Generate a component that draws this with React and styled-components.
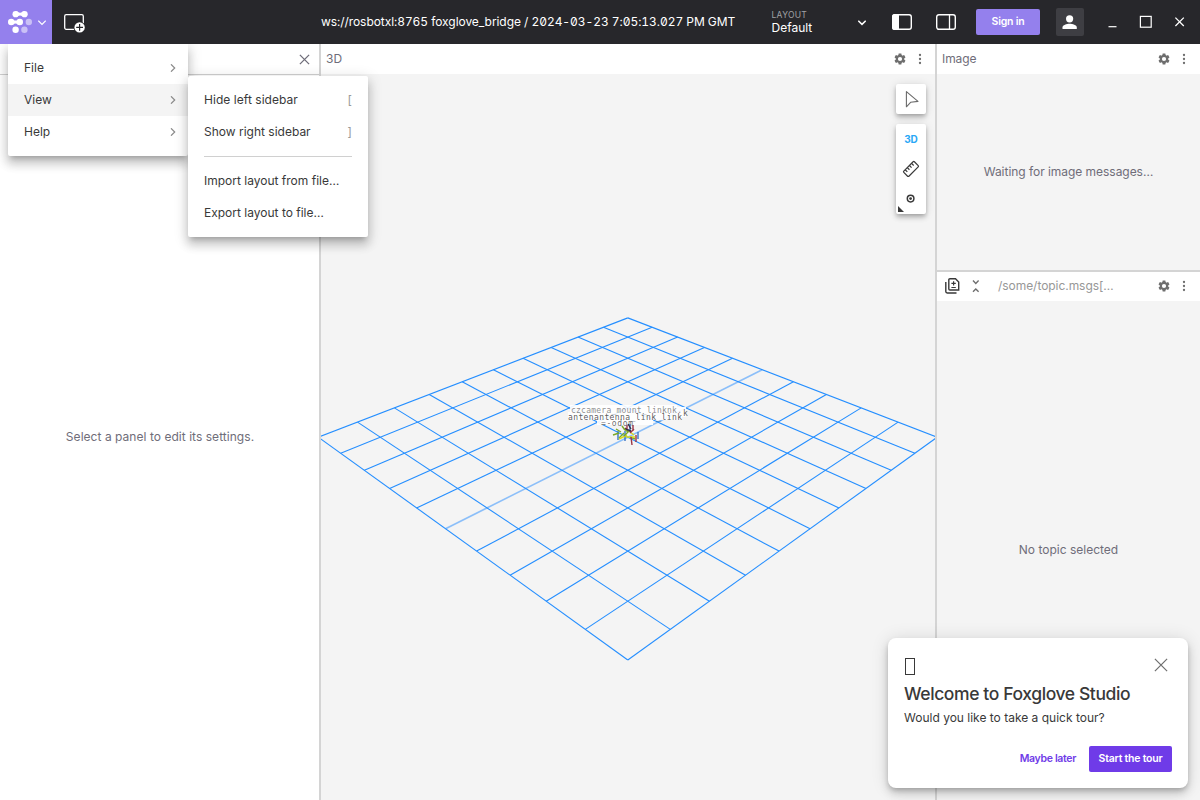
import React from "react";
import styled, { createGlobalStyle } from "styled-components";

const Global = createGlobalStyle`
  *{box-sizing:border-box}
  html,body,#root{margin:0;height:100%}
  body{overflow:hidden;font-family:Inter,"Liberation Sans",sans-serif;font-size:12px;color:#393939}
  svg{display:block;flex:none}
`;

const Page = styled.div`display:flex;flex-direction:column;width:1200px;height:800px;overflow:hidden;position:relative;background:#fff;`;
const AppBar = styled.header`display:flex;align-items:center;height:44px;flex:none;background:#27272b;color:#fff;`;
const LogoButton = styled.div`width:52px;height:44px;background:#9480ed;display:flex;align-items:center;padding-left:7px;gap:5px;`;
const AddPanel = styled.div`padding-left:11px;width:44px;`;
const Source = styled.div`flex:1;padding-left:225px;padding-bottom:2px;white-space:pre;font-feature-settings:"tnum","zero";letter-spacing:-.06px;`;
const LayoutPicker = styled.div`width:95px;display:flex;align-items:center;justify-content:space-between;margin-right:12px;`;
const LayoutLabel = styled.div`display:flex;flex-direction:column;padding:0 0 1px .5px;`;
const Overline = styled.span`font-size:8.5px;line-height:11px;letter-spacing:.3px;color:#a1a1a5;padding-top:1px;`;
const LayoutName = styled.span`font-size:12px;line-height:14px;`;
const BarIcons = styled.div`display:flex;gap:24px;padding-left:14px;padding-right:20px;`;
const SignIn = styled.div`width:64px;height:26px;border-radius:2px;background:#9480ed;font-size:10.5px;font-weight:600;letter-spacing:-.2px;display:flex;align-items:center;justify-content:center;padding-bottom:1px;`;
const Avatar = styled.div`margin-left:16px;width:28px;height:28px;border-radius:2px;background:#3e3e43;display:flex;align-items:center;justify-content:center;`;
const WindowControls = styled.div`display:flex;align-items:center;padding-left:20px;width:116px;gap:18px;`;

const Body = styled.main`display:flex;flex:1;min-height:0;`;
const Sidebar = styled.aside`width:319px;background:#fff;display:flex;flex-direction:column;`;
const SidebarHead = styled.div`height:31px;flex:none;border-bottom:1px solid #d0d0d0;display:flex;align-items:center;justify-content:flex-end;padding:0 9px 0 0;`;
const Empty = styled.div`flex:1;display:flex;align-items:center;justify-content:center;color:#6f6d79;padding:0 0 2px ${p => p.$nudge ?? 0}px;letter-spacing:${p => p.$track ?? 0}px;`;
const Mosaic = styled.section`flex:1;display:grid;grid-template-columns:614px 263px;gap:2px;background:#d4d4d4;padding-left:2px;min-height:0;`;
const RightColumn = styled.div`display:grid;grid-template-rows:226px 528px;gap:2px;`;
const Panel = styled.div`display:flex;flex-direction:column;background:#f4f4f4;position:relative;min-width:0;`;
const Toolbar = styled.div`height:${p => p.$h ?? 30}px;flex:none;background:#fff;display:flex;align-items:center;padding:0 ${p => p.$right ?? 10}px ${p => p.$bottom ?? 0}px ${p => p.$left ?? 5}px;`;
const ToolbarTitle = styled.span`flex:1;padding-bottom:1px;letter-spacing:${p => p.$track ?? 0}px;color:${p => p.$muted ? "#979797" : "#6f6d79"};`;
const ToolbarActions = styled.div`display:flex;align-items:center;gap:7px;`;
const PathIcons = styled.div`display:flex;align-items:center;gap:11px;margin-right:18px;`;
const Scene = styled.div`flex:1;min-height:0;`;
const Tools = styled.div`position:absolute;right:9px;top:40px;display:flex;flex-direction:column;gap:10px;`;
const ToolGroup = styled.div`width:30px;border-radius:2px;background:#fff;box-shadow:0 2px 4px -1px rgba(0,0,0,.2),0 4px 5px rgba(0,0,0,.14),0 1px 10px rgba(0,0,0,.12);`;
const Tool = styled.div`width:30px;height:30px;display:flex;align-items:center;justify-content:center;font-weight:700;font-size:10px;letter-spacing:-.2px;color:#29a8f6;`;

const menuShadow = "0 5px 5px -3px rgba(0,0,0,.2),0 8px 10px 1px rgba(0,0,0,.14),0 3px 14px 2px rgba(0,0,0,.12)";
const Menu = styled.div`position:absolute;left:${p => p.$x}px;top:${p => p.$y}px;width:180px;background:#fff;border-radius:${p => p.$flat ? "0 0 2px 2px" : "2px"};padding:8px 0;height:${p => p.$h}px;box-shadow:${menuShadow};clip-path:${p => p.$flat ? "inset(0 -30px -30px -30px)" : "none"};`;
const MenuItem = styled.div`height:32px;display:flex;align-items:center;justify-content:space-between;padding:0 ${p => p.$submenu ? 11.5 : 16}px 0 16px;background:${p => p.$active ? "#f4f4f4" : "transparent"};`;
const MenuText = styled.span`padding-bottom:2px;letter-spacing:${p => p.$track ?? 0}px;`;
const Shortcut = styled.span`color:#9a9a9a;padding-bottom:2px;`;
const MenuDivider = styled.div`height:1px;background:#d0d0d0;margin:8px 16px;`;

const Tour = styled.div`position:absolute;left:888px;top:638px;width:300px;height:150px;border-radius:8px;background:#fff;padding:16px;display:flex;flex-direction:column;box-shadow:0 3px 5px -1px rgba(0,0,0,.2),0 6px 10px rgba(0,0,0,.14),0 1px 18px rgba(0,0,0,.12);`;
const TourTop = styled.div`display:flex;justify-content:space-between;height:24px;padding:4px 4px 0 0;`;
const MissingGlyph = styled.span`width:10px;height:17px;border:1px solid #393939;margin-left:1px;`;
const TourTitle = styled.div`font-size:17.5px;font-weight:500;letter-spacing:-.4px;line-height:24px;margin-top:4px;`;
const TourText = styled.div`line-height:20px;margin-top:2px;`;
const TourActions = styled.div`display:flex;justify-content:flex-end;align-items:center;gap:13px;margin-top:18px;font-size:10.5px;font-weight:600;color:#6f3be8;letter-spacing:-.33px;`;
const LaterButton = styled.div`padding-bottom:1px;`;
const StartButton = styled.div`width:83px;height:26px;background:#6f3be8;color:#fff;border-radius:2px;display:flex;align-items:center;justify-content:center;letter-spacing:-.22px;padding-bottom:1px;`;

const Logo = () => (
  <svg width="26" height="24" viewBox="0 0 26 24" fill="#fff">
    <circle cx="8.6" cy="4.2" r="3.1" /><circle cx="17.6" cy="4.2" r="3.1" />
    <path d="M9 1.3 C11 1.5 11 2.8 13.1 2.8 C15.2 2.8 15.2 1.5 17.2 1.3 V7.1 C15.2 6.9 15.2 5.6 13.1 5.6 C11 5.6 11 6.9 9 7.1Z" />
    <circle cx="4.2" cy="12" r="3.2" /><circle cx="12.8" cy="12" r="3.2" />
    <path d="M4.4 8.9 C6.4 9.2 6.4 10.5 8.5 10.5 C10.6 10.5 10.6 9.2 12.6 8.9 V15.1 C10.6 14.8 10.6 13.5 8.5 13.5 C6.4 13.5 6.4 14.8 4.4 15.1Z" />
    <circle cx="21.8" cy="12" r="3.2" opacity=".5" />
    <circle cx="8.6" cy="19.8" r="3.2" /><circle cx="17.4" cy="19.8" r="3.2" opacity=".5" />
  </svg>
);
const Chevron = ({ dir = "down", color = "#fff", sw = 1.2 }) => (
  <svg width="8" height="8" viewBox="0 0 8 8" fill="none" stroke={color} strokeWidth={sw}>
    <path d={dir === "down" ? "M.3 2.7 4 6.4 7.7 2.7" : "M2 .3 5.7 4 2 7.7"} />
  </svg>
);
const Cross = ({ size, sw, color }) => (
  <svg width={size} height={size} viewBox={`0 0 ${size} ${size}`} stroke={color} strokeWidth={sw}>
    <path d={`M.9 .9 L${size - 0.9} ${size - 0.9} M${size - 0.9} .9 L.9 ${size - 0.9}`} />
  </svg>
);
const AddPanelIcon = () => (
  <svg width="23" height="22" viewBox="0 0 23 22">
    <rect x="1.7" y="3.7" width="18.6" height="14.6" rx="1.5" fill="none" stroke="#fff" strokeWidth="1.3" />
    <circle cx="16.6" cy="16.4" r="6" fill="#27272b" />
    <circle cx="16.6" cy="16.4" r="5.2" fill="#fff" />
    <path d="M16.6 13v6.8M13.2 16.4h6.8" stroke="#27272b" strokeWidth="1.2" />
  </svg>
);
const SidebarIcon = ({ right }) => (
  <svg width="20" height="16" viewBox="0 0 20 16">
    <rect x=".7" y=".7" width="18.6" height="14.6" rx="2.2" fill="none" stroke="#fff" strokeWidth="1.4" />
    {right ? <path d="M13.5 0v16" stroke="#fff" strokeWidth="1.3" /> : <path d="M2.5 0H7v16H2.5Q0 16 0 13.5v-11Q0 0 2.5 0" fill="#fff" />}
  </svg>
);
const Gear = () => (
  <svg width="14" height="14" viewBox="0 0 24 24" fill="#6e6e6e">
    <path d="M19.14 12.94c.04-.3.06-.61.06-.94 0-.32-.02-.64-.07-.94l2.03-1.58c.18-.14.23-.41.12-.61l-1.92-3.32c-.12-.22-.37-.29-.59-.22l-2.39.96c-.5-.38-1.03-.7-1.62-.94l-.36-2.54c-.04-.24-.24-.41-.48-.41h-3.84c-.24 0-.43.17-.47.41l-.36 2.54c-.59.24-1.13.57-1.62.94l-2.39-.96c-.22-.08-.47 0-.59.22L2.74 8.87c-.12.21-.08.47.12.61l2.03 1.58c-.05.3-.09.63-.09.94s.02.64.07.94l-2.03 1.58c-.18.14-.23.41-.12.61l1.92 3.32c.12.22.37.29.59.22l2.39-.96c.5.38 1.03.7 1.62.94l.36 2.54c.05.24.24.41.48.41h3.84c.24 0 .44-.17.47-.41l.36-2.54c.59-.24 1.13-.56 1.62-.94l2.39.96c.22.08.47 0 .59-.22l1.92-3.32c.12-.22.07-.47-.12-.61zM12 15.6A3.6 3.6 0 1 1 12 8.4a3.6 3.6 0 0 1 0 7.2" />
  </svg>
);
const Dots = () => (
  <svg width="12" height="14" viewBox="0 0 12 14" fill="#6e6e6e">
    <circle cx="6" cy="3" r="1.15" /><circle cx="6" cy="7" r="1.15" /><circle cx="6" cy="11" r="1.15" />
  </svg>
);
const Person = () => (
  <svg width="16" height="16" viewBox="0 0 16 16" fill="#fff">
    <circle cx="7.6" cy="4.8" r="3.6" /><path d="M.5 15v-1.6C.5 11.1 4.7 9.8 7.6 9.8s7.2 1.3 7.2 3.6V15z" />
  </svg>
);
const DiffIcon = () => (
  <svg width="16" height="18" viewBox="0 0 16 18" fill="none" stroke="#393939" strokeWidth="1.4">
    <path d="M4.9 1.7H10.5L13.7 5V13H4.9Q3.8 13 3.8 12V2.7Q3.8 1.7 4.9 1.7Z" />
    <path d="M.8 5V14.6Q.8 16 2.2 16H11.5" /><path d="M8.6 4.2V8.6M6.4 6.4H10.8M6.4 10.5H10.8" strokeWidth="1.2" />
  </svg>
);
const Collapse = () => (
  <svg width="8" height="14" viewBox="0 0 8 14" fill="none" stroke="#6e6e6e" strokeWidth="1.4">
    <path d="M1 1.6 3.8 4.4 6.6 1.6M1 12.8 3.8 10 6.6 12.8" />
  </svg>
);
const PointerIcon = () => (
  <svg width="16" height="18" viewBox="0 0 16 18" fill="none" stroke="#6b6b6b" strokeWidth="1.1" strokeLinejoin="round">
    <path d="M3.4 1.6 V16.8 L7.6 12.3 L15 11.4 Z" />
  </svg>
);
const RulerIcon = () => (
  <svg width="18" height="18" viewBox="0 0 18 18" fill="none" stroke="#393939" strokeWidth="1.2">
    <g transform="rotate(-45 9 9)"><rect x="1.5" y="5.4" width="15" height="7.2" rx=".9" /><path d="M4.4 5.4v3M7.4 5.4v3M10.4 5.4v3M13.4 5.4v3" /></g>
  </svg>
);
const PublishIcon = () => (
  <svg width="30" height="30" viewBox="0 0 30 30">
    <circle cx="14.6" cy="14.6" r="3.3" fill="none" stroke="#393939" strokeWidth="1.5" /><circle cx="14.6" cy="14.6" r="1.4" fill="#393939" />
    <path d="M2 22v6h6z" fill="#393939" />
  </svg>
);

const project = (a, b) => {
  const s = a + b, d = a - b, w = 1 - 0.03023 * s;
  return [306.8 + (30.94 * d) / w, 363.2 + (15.54 * s) / w];
};
const gridLine = (p, q) => {
  const [x1, y1] = project(...p), [x2, y2] = project(...q);
  return { x1, y1, x2, y2 };
};
const steps = Array.from({ length: 11 }, (_, i) => i - 5);
const axes = [
  ["#3b74c4", "M297 357v9M304 357v10M317 358v7M309 350v8"],
  ["#79a827", "M292 361l6-2M295 355l5 3M298 364l5-5M309 363l5 2M301 352l3 4"],
  ["#d9da1c", "M298 365l8-4M305 363h9M309 358l4 3"],
  ["#9c3545", "M304 354l6 4M306 351v6M313 355l-4 4M310 363l1 8M312 351v6M315 361v7"],
  ["#30334c", "M304 355l6 2M307 350l3 5"],
  ["#79a827", "M308 357l-5 5M303 355l4 3"],
];
const GridScene = () => (
  <svg width="614" height="726" viewBox="0 0 614 726">
    <line {...gridLine([0, -5], [0, 5])} stroke="#8cbff9" strokeWidth="1.7" />
    <g stroke="#248eff" strokeWidth="1.1">
      {steps.filter(i => i !== 0).map(i => <line key={"a" + i} {...gridLine([i, -5], [i, 5])} />)}
      {steps.map(i => <line key={"b" + i} {...gridLine([-5, i], [5, i])} />)}
    </g>
    <path d="M249 331h107v2h9v10h-4v3H332v5H276v-5H247v-8h2z" fill="#fff" opacity=".9" />
    <g fontFamily='"DejaVu Sans Mono","Liberation Mono",monospace' fontSize="8" fill="#111">
      <text x="280" y="352" textLength="32" fillOpacity=".65">=-odom</text>
      <text x="250" y="339" textLength="111" fillOpacity=".5">czcamera_mount_linknk.</text>
      <text x="362" y="342" fillOpacity=".7">k</text>
      <text x="247" y="346" textLength="114" fillOpacity=".72">antenantenna_link_link</text>
    </g>
    <g fill="none" strokeWidth="1.4">{axes.map(([c, d], i) => <path key={i} d={d} stroke={c} />)}</g>
  </svg>
);

const PanelActions = () => <ToolbarActions><Gear /><Dots /></ToolbarActions>;

export default function App() {
  return (
    <Page>
      <Global />
      <AppBar>
        <LogoButton><Logo /><Chevron /></LogoButton>
        <AddPanel><AddPanelIcon /></AddPanel>
        <Source>ws://rosbotxl:8765 foxglove_bridge / 2024-03-23 7:05:13.027 PM GMT</Source>
        <LayoutPicker>
          <LayoutLabel><Overline>LAYOUT</Overline><LayoutName>Default</LayoutName></LayoutLabel>
          <Chevron sw={1.5} />
        </LayoutPicker>
        <BarIcons><SidebarIcon /><SidebarIcon right /></BarIcons>
        <SignIn>Sign in</SignIn>
        <Avatar><Person /></Avatar>
        <WindowControls>
          <svg width="16" height="16" viewBox="0 0 16 16"><path d="M4.5 12.7h8" stroke="#fff" strokeWidth="1.2" /></svg>
          <svg width="16" height="16" viewBox="0 0 16 16"><rect x="2.4" y="2.4" width="10.8" height="10.8" fill="none" stroke="#fff" strokeWidth="1.2" /></svg>
          <svg width="16" height="16" viewBox="0 0 16 16"><path d="M3.4 3.6l8.4 8.4M11.8 3.6l-8.4 8.4" stroke="#fff" strokeWidth="1.3" /></svg>
        </WindowControls>
      </AppBar>
      <Body>
        <Sidebar>
          <SidebarHead><Cross size={11} sw={1.3} color="#6f6d79" /></SidebarHead>
          <Empty $track={0.04} $nudge={1}>Select a panel to edit its settings.</Empty>
        </Sidebar>
        <Mosaic>
          <Panel>
            <Toolbar $right={9}><ToolbarTitle>3D</ToolbarTitle><PanelActions /></Toolbar>
            <Scene><GridScene /></Scene>
            <Tools>
              <ToolGroup><Tool><PointerIcon /></Tool></ToolGroup>
              <ToolGroup><Tool>3D</Tool><Tool><RulerIcon /></Tool><Tool><PublishIcon /></Tool></ToolGroup>
            </Tools>
          </Panel>
          <RightColumn>
            <Panel>
              <Toolbar><ToolbarTitle $track={-0.08}>Image</ToolbarTitle><PanelActions /></Toolbar>
              <Empty $track={-0.04}>Waiting for image messages…</Empty>
            </Panel>
            <Panel>
              <Toolbar $left={8} $h={29} $bottom={1}>
                <PathIcons><DiffIcon /><Collapse /></PathIcons>
                <ToolbarTitle $muted $track={-0.05}>/some/topic.msgs[…</ToolbarTitle>
                <PanelActions />
              </Toolbar>
              <Empty>No topic selected</Empty>
            </Panel>
          </RightColumn>
        </Mosaic>
      </Body>
      <Menu $x={8} $y={44} $h={112} $flat>
        <MenuItem $submenu><MenuText>File</MenuText><Chevron dir="right" color="#8a8a8a" /></MenuItem>
        <MenuItem $submenu $active><MenuText>View</MenuText><Chevron dir="right" color="#8a8a8a" /></MenuItem>
        <MenuItem $submenu><MenuText>Help</MenuText><Chevron dir="right" color="#8a8a8a" /></MenuItem>
      </Menu>
      <Menu $x={188} $y={76} $h={161}>
        <MenuItem><MenuText $track={0.05}>Hide left sidebar</MenuText><Shortcut>[</Shortcut></MenuItem>
        <MenuItem><MenuText>Show right sidebar</MenuText><Shortcut>]</Shortcut></MenuItem>
        <MenuDivider />
        <MenuItem><MenuText>Import layout from file…</MenuText></MenuItem>
        <MenuItem><MenuText>Export layout to file…</MenuText></MenuItem>
      </Menu>
      <Tour>
        <TourTop><MissingGlyph /><Cross size={14} sw={1.2} color="#6e6e6e" /></TourTop>
        <TourTitle>Welcome to Foxglove Studio</TourTitle>
        <TourText>Would you like to take a quick tour?</TourText>
        <TourActions><LaterButton>Maybe later</LaterButton><StartButton>Start the tour</StartButton></TourActions>
      </Tour>
    </Page>
  );
}
